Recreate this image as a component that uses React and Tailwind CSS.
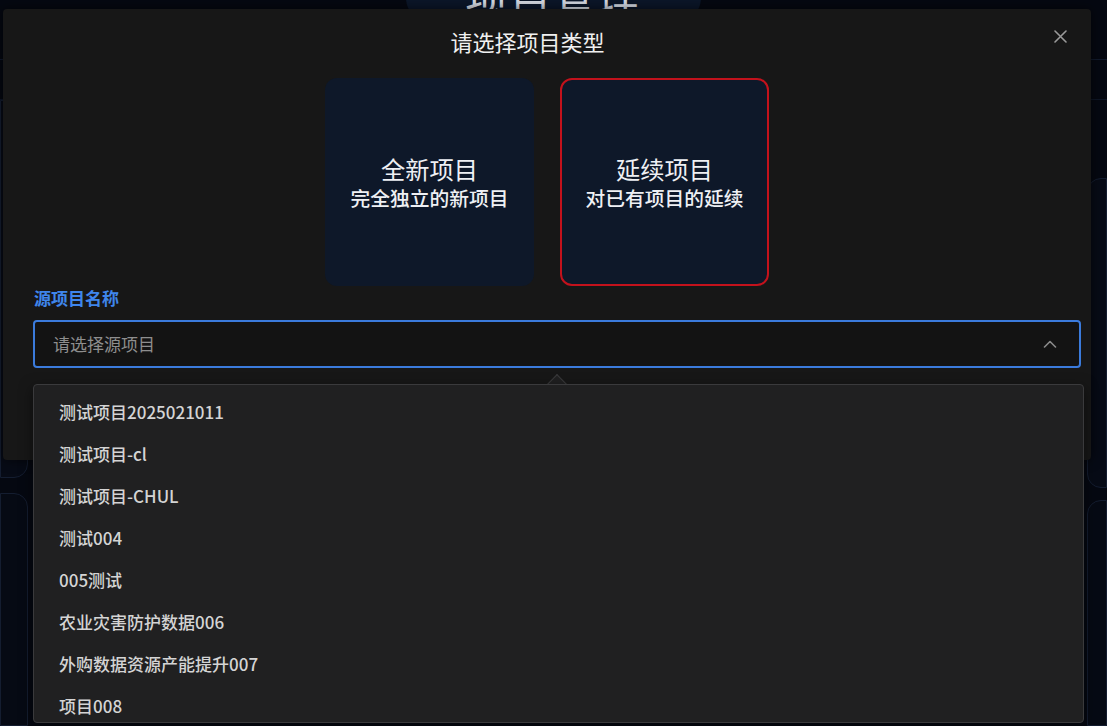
import React from "react";

const items = [
  "测试项目2025021011",
  "测试项目-cl",
  "测试项目-CHUL",
  "测试004",
  "005测试",
  "农业灾害防护数据006",
  "外购数据资源产能提升007",
  "项目008",
];

function Card({ title, sub, active }) {
  return (
    <div
      className={
        "w-[209px] h-[208px] rounded-[12px] bg-[#0e1829] flex flex-col items-center justify-center pt-[2px] " +
        (active ? "border-2 border-[#c3121c]" : "border-2 border-transparent")
      }
    >
      <div className="text-[24.25px] leading-[30px] text-[#eef0f4]">{title}</div>
      <div className="text-[19.75px] leading-[28px] font-medium text-[#eef0f4]">{sub}</div>
    </div>
  );
}

export default function App() {
  return (
    <div
      className="relative w-[1107px] h-[726px] overflow-hidden bg-[#050811]"
      style={{ fontFamily: '"Noto Sans CJK SC", "Noto Sans", sans-serif' }}
    >
      {/* background page */}
      <div className="flex flex-col h-full">
        <div className="h-[60px] flex justify-center border-b border-[#111a2c]">
          <div className="w-[295px] h-[60px] mt-[-38px] rounded-b-[24px] bg-[#0b1629] flex items-center justify-center">
            <span className="text-[42px] leading-[50px] text-[#d6dbe4] tracking-[2px] mt-[8px]">项目管理</span>
          </div>
        </div>
        <div className="h-[40px] border-b border-[#0e1626]"></div>
        <div className="flex-1 flex gap-[14px] px-0">
          <div className="w-[28px] flex flex-col gap-[15px]">
            <div className="h-[378px] rounded-r-[14px] border border-[#141d30] bg-[#070b16]"></div>
            <div className="flex-1 rounded-tr-[14px] border border-[#141d30] bg-[#060a14]"></div>
          </div>
          <div className="flex-1"></div>
          <div className="w-[20px] flex flex-col gap-[12px] pt-[78px]">
            <div className="h-[310px] rounded-l-[14px] border border-[#141d30] bg-[#070b16]"></div>
            <div className="flex-1 rounded-tl-[14px] border border-[#141d30] bg-[#060a14]"></div>
          </div>
        </div>
      </div>

      {/* modal */}
      <div className="absolute left-[3px] top-[9px] w-[1088px] h-[451px] rounded-[4px] bg-[#171717] shadow-[0_0_12px_rgba(0,0,0,0.6)]">
        <div className="relative flex flex-col">
          <div className="flex justify-center pr-[39px] pt-[17px]">
            <div className="text-[22px] leading-[30px] text-[#f0f0f0]">请选择项目类型</div>
          </div>
          <button className="absolute right-[22px] top-[18px] w-[18px] h-[18px] flex items-center justify-center text-[#9a9a9a]">
            <svg width="13" height="13" viewBox="0 0 13 13" fill="none" stroke="currentColor" strokeWidth="1.6" strokeLinecap="round">
              <path d="M1 1L12 12M12 1L1 12" />
            </svg>
          </button>

          <div className="flex justify-center gap-[26px] mt-[22px]">
            <Card title="全新项目" sub="完全独立的新项目" />
            <Card title="延续项目" sub="对已有项目的延续" active />
          </div>

          <div className="pl-[30px] pr-[10px] mt-[0px]">
            <div className="text-[17px] leading-[24px] font-semibold text-[#3f86ec] pl-[1px]">源项目名称</div>
            <div className="relative mt-[10px]">
              <div className="h-[48px] rounded-[4px] border-2 border-[#3b7bdc] bg-[#131313] flex items-center justify-between pl-[18px] pr-[22px]">
                <span className="text-[17px] text-[#8e8e8e]">请选择源项目</span>
                <svg width="14" height="8" viewBox="0 0 14 8" fill="none" stroke="#8a8a8a" strokeWidth="1.6" strokeLinecap="round" strokeLinejoin="round">
                  <path d="M1.5 7L7 1.5L12.5 7" />
                </svg>
              </div>

              {/* dropdown */}
              <div className="absolute left-0 top-[64px] w-[1051px] z-10">
                <div className="absolute left-[517px] top-[-7px] w-[14px] h-[14px] rotate-45 bg-[#202021] border-l border-t border-[#3a3a3c]"></div>
                <div className="relative h-[339px] overflow-hidden rounded-[4px] border border-[#3a3a3c] bg-[#202021] shadow-[0_4px_14px_rgba(0,0,0,0.5)] pt-[6px]">
                  {items.map((t) => (
                    <div key={t} className="h-[42px] flex items-center pl-[25px] text-[17px] font-medium text-[#d4d4d4]">
                      {t}
                    </div>
                  ))}
                </div>
              </div>
            </div>
          </div>
        </div>
      </div>
    </div>
  );
}
